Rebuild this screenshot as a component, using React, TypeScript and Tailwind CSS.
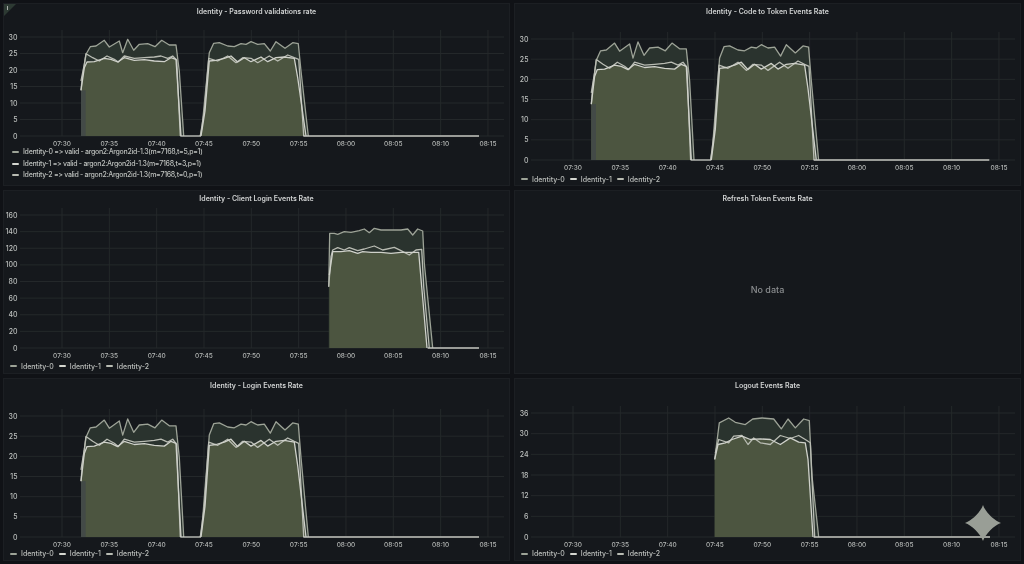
type Pt = [number, number];

// traced points, in 3x zoom coordinates of the first panel
const HUMP_FRAME = { base: 405, top: 108 };
const CLIENT_FRAME = { base: 484, top: 85 };
const LOGOUT_FRAME = { base: 484, top: 110 };

const topA: Pt[] = [[240,268],[243,235],[255,160],[268,137],[285,135],[310,118],[325,138],[355,120],[365,155],[380,115],[398,148],[415,130],[440,128],[462,137],[482,118],[505,132],[525,132],[535,210],[548,405]];
const topB: Pt[] = [[598,405],[603,380],[625,155],[638,127],[655,125],[680,135],[700,137],[720,128],[735,130],[750,122],[770,130],[790,128],[808,150],[825,122],[852,142],[875,125],[892,128],[900,210],[922,405]];
const midA1: Pt[] = [[240,240],[250,190],[255,158],[275,170],[295,180],[318,165],[340,175],[352,183],[370,165],[400,172],[430,170],[460,168],[480,165],[500,172],[515,165],[527,178],[538,405]];
const midA2: Pt[] = [[598,405],[610,330],[623,172],[650,180],[680,165],[705,185],[725,170],[750,172],[770,185],[805,165],[830,180],[860,162],[880,170],[893,175],[908,405]];
const midB1: Pt[] = [[240,268],[250,200],[258,183],[280,182],[310,172],[330,175],[350,183],[370,170],[400,178],[430,176],[460,180],[490,182],[510,170],[525,175],[540,405]];
const midB2: Pt[] = [[600,405],[612,330],[625,180],[645,178],[670,172],[690,165],[710,183],[730,170],[750,182],[780,168],[800,182],[825,170],[850,168],[880,172],[890,230],[915,405]];

const clientTop: Pt[] = [[983,300],[986,140],[1000,140],[1010,143],[1030,135],[1050,137],[1075,132],[1090,127],[1105,138],[1120,125],[1140,130],[1170,130],[1200,130],[1220,127],[1235,145],[1250,127],[1265,133],[1270,230],[1295,484]];
const clientA: Pt[] = [[983,300],[990,210],[995,190],[1010,183],[1030,190],[1045,183],[1070,192],[1090,187],[1120,178],[1145,190],[1180,182],[1200,192],[1225,205],[1245,190],[1262,188],[1268,300],[1285,484]];
const clientB: Pt[] = [[985,265],[995,195],[1020,195],[1045,192],[1070,200],[1085,195],[1110,197],[1140,197],[1170,200],[1200,197],[1230,197],[1253,197],[1262,300],[1278,484]];

const logoutTop: Pt[] = [[608,250],[622,140],[650,125],[670,138],[700,145],[722,128],[750,125],[785,128],[808,158],[828,128],[850,155],[875,128],[892,133],[900,300],[920,484]];
const logoutA: Pt[] = [[610,230],[620,190],[650,200],[665,180],[690,178],[708,205],[725,185],[745,200],[775,205],[805,178],[835,187],[860,178],[880,190],[895,200],[908,484]];
const logoutB: Pt[] = [[608,250],[618,205],[640,200],[660,190],[690,180],[715,190],[745,188],[775,190],[805,205],[835,185],[860,198],[880,200],[888,250],[903,484]];

type Hump = { top: Pt[]; a: Pt[]; b: Pt[]; frame: { base: number; top: number } };

const firstHump: Hump = { top: topA, a: midA1, b: midB1, frame: HUMP_FRAME };
const secondHump: Hump = { top: topB, a: midA2, b: midB2, frame: HUMP_FRAME };
const clientHump: Hump = { top: clientTop, a: clientA, b: clientB, frame: CLIENT_FRAME };
const logoutHump: Hump = { top: logoutTop, a: logoutA, b: logoutB, frame: LOGOUT_FRAME };

const X_TICKS = ["07:30", "07:35", "07:40", "07:45", "07:50", "07:55", "08:00", "08:05", "08:10", "08:15"];

type ChartProps = {
  height: number;
  top: number;
  base: number;
  yLabels: string[];
  humps: Hump[];
  strip?: boolean;
  dx?: number;
};

function Chart({ height, top, base, yLabels, humps, strip, dx = 0 }: ChartProps) {
  const px = (zx: number) => zx / 3 - 3 + dx;
  const py = (zy: number, f: Hump["frame"]) => base - ((f.base - zy) / (f.base - f.top)) * (base - top);
  const pts = (list: Pt[], f: Hump["frame"]) => list.map(([x, y]) => `${px(x).toFixed(1)},${py(y, f).toFixed(1)}`).join(" ");
  const step = (base - top) / (yLabels.length - 1);
  const end = humps[humps.length - 1].top;
  const lastX = end[end.length - 1][0];

  return (
    <svg viewBox={`0 0 507 ${height}`} width={507} height={height} className="block shrink-0">
      {X_TICKS.map((t, i) => (
        <line key={t} x1={58 + 47.33 * i} x2={58 + 47.33 * i} y1={top - 7} y2={base} stroke="#24282a" strokeWidth="1" />
      ))}
      {yLabels.map((l, i) => (
        <g key={i}>
          <line x1={16} x2={500} y1={top + step * i} y2={top + step * i} stroke="#24282a" strokeWidth="1" />
          <text x={13.5} y={top + step * i + 2.5} textAnchor="end" fontSize="7" fontWeight="500" fill="#bcbfbd">{l}</text>
        </g>
      ))}
      {humps.map((h, i) => (
        <g key={i}>
          <polygon points={`${px(h.top[0][0])},${base} ${pts(h.top, h.frame)}`} fill="#2a332e" />
          <polygon points={`${px(h.b[0][0])},${base} ${pts(h.b, h.frame)}`} fill="#4c5540" />
        </g>
      ))}
      {strip && <rect x={px(240)} y={py(268, HUMP_FRAME)} width={4.7} height={base - py(268, HUMP_FRAME)} fill="#434a47" />}
      {humps.map((h, i) => (
        <g key={i} fill="none" strokeLinejoin="round">
          <polyline points={pts(h.top, h.frame)} stroke="#9da397" strokeWidth="1.3" />
          <polyline points={pts(h.a, h.frame)} stroke="#b9bcb3" strokeWidth="1.3" />
          <polyline points={pts(h.b, h.frame)} stroke="#cfd1ca" strokeWidth="1.3" />
        </g>
      ))}
      {humps.length > 1 && (
        <line x1={px(538)} x2={px(600)} y1={base} y2={base} stroke="#c9cbc5" strokeWidth="1.3" />
      )}
      <line x1={px(lastX) - 5} x2={px(1434)} y1={base} y2={base} stroke="#c4c6c0" strokeWidth="1.5" />
      {X_TICKS.map((t, i) => (
        <text key={t} x={58 + 47.33 * i} y={base + 9.5} textAnchor="middle" fontSize="6.5" fontWeight="500" fill="#b4b7b5">{t}</text>
      ))}
    </svg>
  );
}

function Swatch({ color }: { color: string }) {
  return <span className="inline-block w-[7px] h-[2px] rounded-sm shrink-0" style={{ backgroundColor: color }} />;
}

const SWATCHES = ["#9da397", "#d5d7d0", "#b9bcb3"];

function InlineLegend() {
  return (
    <div className="flex items-center gap-[5px] pl-[6px] h-[12px] text-[7px] font-medium leading-none text-[#bcbfbc]">
      {["Identity-0", "Identity-1", "Identity-2"].map((name, i) => (
        <div key={name} className="flex items-center gap-1">
          <Swatch color={SWATCHES[i]} />
          <span>{name}</span>
        </div>
      ))}
    </div>
  );
}

function ListLegend() {
  return (
    <div className="flex flex-col -mt-[2px] pl-2 text-[7px] font-medium leading-[11.7px] tracking-[-0.3px] text-[#bcbfbc]">
      {[
        "Identity-0 => valid - argon2:Argon2id-1.3(m=7168,t=5,p=1)",
        "Identity-1 => valid - argon2:Argon2id-1.3(m=7168,t=3,p=1)",
        "Identity-2 => valid - argon2:Argon2id-1.3(m=7168,t=0,p=1)",
      ].map((name, i) => (
        <div key={name} className="flex items-center gap-1">
          <Swatch color={SWATCHES[i]} />
          <span>{name}</span>
        </div>
      ))}
    </div>
  );
}

function Panel({ title, children, info }: { title: string; children: React.ReactNode; info?: boolean }) {
  return (
    <div className="relative flex flex-col min-h-0 overflow-hidden bg-[#15181c] border border-[#1c1f23]">
      {info && (
        <svg viewBox="0 0 12 12" className="absolute left-0 top-0 w-3 h-3">
          <polygon points="0,0 12,0 0,12" fill="#2d3a33" />
          <rect x="3" y="2" width="1" height="4" fill="#a9b0aa" />
        </svg>
      )}
      <div className="h-[16px] shrink-0 flex items-center justify-center text-[7px] font-semibold text-[#d0d2d2]">{title}</div>
      {children}
    </div>
  );
}

const Y30 = ["30", "25", "20", "15", "10", "5", "0"];

export default function App() {
  return (
    <div className="relative w-[1024px] h-[564px] overflow-hidden bg-[#101216] font-[Inter,sans-serif] will-change-transform">
      <div className="grid grid-cols-2 grid-rows-3 gap-1 p-[3px] w-full h-full">
        <Panel title="Identity - Password validations rate" info>
          <Chart height={128} top={17} base={116} yLabels={Y30} humps={[firstHump, secondHump]} strip />
          <ListLegend />
        </Panel>
        <Panel title="Identity - Code to Token Events Rate">
          <Chart height={153} top={19} base={140} yLabels={Y30} humps={[firstHump, secondHump]} strip dx={-0.7} />
          <InlineLegend />
        </Panel>
        <Panel title="Identity - Client Login Events Rate">
          <Chart height={153} top={8} base={141} yLabels={["160", "140", "120", "100", "80", "60", "40", "20", "0"]} humps={[clientHump]} />
          <InlineLegend />
        </Panel>
        <Panel title="Refresh Token Events Rate">
          <div className="flex-1 flex items-center justify-center text-[9px] font-medium text-[#8b8e90]">No data</div>
        </Panel>
        <Panel title="Identity - Login Events Rate">
          <Chart height={153} top={21} base={142} yLabels={Y30} humps={[firstHump, secondHump]} strip />
          <InlineLegend />
        </Panel>
        <Panel title="Logout Events Rate">
          <Chart height={153} top={18} base={142} yLabels={["36", "30", "24", "18", "12", "6", "0"]} humps={[logoutHump]} />
          <InlineLegend />
        </Panel>
      </div>
      <svg viewBox="0 0 36 36" className="absolute left-[965px] top-[505px] w-9 h-9">
        <path d="M18 0C20 6.5 29.5 16 36 18C29.5 20 20 29.5 18 36C16 29.5 6.5 20 0 18C6.5 16 16 6.5 18 0Z" fill="#999e96" />
      </svg>
    </div>
  );
}
